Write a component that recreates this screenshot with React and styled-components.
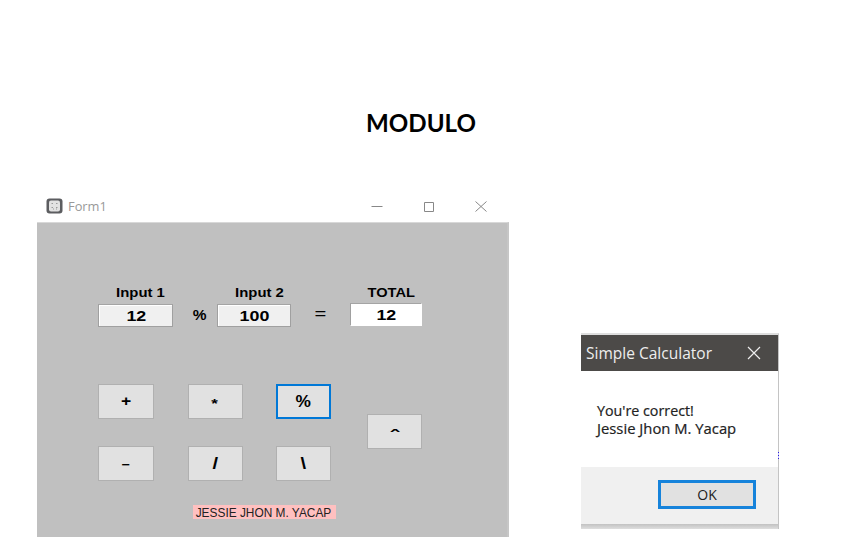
import React from 'react';
import styled, { createGlobalStyle } from 'styled-components';

const GlobalStyle = createGlobalStyle`
  * { box-sizing: border-box; }
  body { margin: 0; background: #fff; overflow: hidden; }
`;

const Page = styled.main`
  width: 844px;
  height: 543px;
  padding-top: 104px;
  background: #fff;
  color: #000;
  font-family: 'Liberation Sans', sans-serif;
`;

const Heading = styled.h1`
  margin: 0 0 50px;
  height: 36px;
  padding-right: 2px;
  text-align: center;
  font: 700 25px/36px Lato, sans-serif;
`;

const Desktop = styled.div`
  display: flex;
  align-items: flex-start;
  padding-left: 37px;
  gap: 72px;
`;

const Text = styled.span`
  display: inline-block;
  white-space: pre;
  transform: translate(${(p) => p.$dx || 0}px, ${(p) => p.$dy || 0}px) scaleX(${(p) => p.$stretch || 1});
  transform-origin: ${(p) => p.$origin || 'center'};
`;

const Window = styled.section`
  width: 472px;
  height: 347px;
`;

const TitleBar = styled.header`
  display: flex;
  align-items: center;
  height: 32px;
  padding: 0 22.5px 0 9px;
`;

const WindowTitle = styled.div`
  flex: 1;
  padding-left: 5px;
  color: #999;
  font: 12px/16px 'Open Sans', sans-serif;
`;

const Controls = styled.div`
  display: flex;
  gap: 40px;
`;

const Form = styled.div`
  height: 315px;
  padding: 64px 0 0 61px;
  background: #c0c0c0;
  border-top: 1px solid #d8d8d8;
  border-right: 2px solid #c6c6c6;
`;

const Inputs = styled.div`
  display: grid;
  grid-template-columns: 75px 44px 74px 59px 72px;
  height: 41px;
`;

const Field = styled.div`
  display: flex;
  flex-direction: column;
  align-items: center;
`;

const Label = styled.div`
  height: ${(p) => p.$height || 17}px;
  font: 700 12.5px/13px 'Liberation Sans', sans-serif;
`;

const ValueBox = styled.div`
  display: flex;
  align-items: center;
  justify-content: center;
  width: 100%;
  height: 23px;
  background: ${(p) => (p.$result ? '#fff' : '#f0f0f0')};
  border: 1px solid ${(p) => (p.$result ? '#fff' : '#a0a0a0')};
  border-top-color: #a4a4a4;
  border-left-color: #a0a0a0;
  box-shadow: inset 1px 1px 0 #fff;
  font: 700 15px/20px 'Liberation Sans', sans-serif;
`;

const Operator = styled.div`
  display: flex;
  justify-content: center;
  padding-top: 18px;
  font: ${(p) => (p.$light ? 400 : 700)} 15px/20px 'Liberation Sans', sans-serif;
`;

const Pad = styled.div`
  display: flex;
  gap: 36px;
  margin-top: 56px;
`;

const Keys = styled.div`
  display: grid;
  grid-template-columns: 56px 55px 55px;
  grid-template-rows: 35px 35px;
  justify-content: space-between;
  row-gap: 27px;
  width: 233px;
`;

const Key = styled.button`
  display: flex;
  align-items: center;
  justify-content: center;
  width: 100%;
  height: 35px;
  padding: 0;
  color: #000;
  background: #e1e1e1;
  border: ${(p) => (p.$active ? '2px solid #0078d7' : '1px solid #b0b0b0')};
  font: 700 ${(p) => p.$size || 15}px/20px 'Liberation Sans', sans-serif;
`;

const PowerKey = styled.div`
  width: 55px;
  padding-top: 30px;
`;

const NameTag = styled.div`
  display: flex;
  justify-content: center;
  width: 143px;
  height: 14px;
  margin: 24px 0 0 95px;
  background: #ffc0c0;
  color: #222;
  font: 12px/14px 'Liberation Sans', sans-serif;
`;

const Dialog = styled.section`
  width: 198px;
  height: 196px;
  margin-top: 143px;
  border-top: 2px solid #dedede;
  border-right: 1px solid #c4c4c4;
`;

const DialogBar = styled.header`
  display: flex;
  align-items: center;
  justify-content: space-between;
  height: 36px;
  padding: 0 17px 0 5px;
  background: #4c4a48;
  color: #eee;
  font: 16px/22px 'Open Sans', sans-serif;
`;

const Message = styled.div`
  height: 96px;
  padding: 31px 0 0 16px;
  color: #222;
  font: 14px/18px 'Open Sans', sans-serif;
  -webkit-text-stroke: 0.2px #222;
`;

const MessageLine = styled.div`
  height: 18px;
`;

const DialogFooter = styled.footer`
  display: flex;
  align-items: flex-start;
  justify-content: flex-end;
  height: 57px;
  padding: 13px 22px 0 0;
  background: #f0f0f0;
`;

const OkButton = styled.button`
  width: 98px;
  height: 29px;
  padding: 0;
  background: #e1e1e1;
  border: 3px solid #1683db;
  color: #222;
  font: 14px/23px 'Open Sans', sans-serif;
`;

const Shadow = styled.div`
  height: 5px;
  background: linear-gradient(#c2c2c2, #dedede);
`;

const EdgeMark = styled.i`
  position: absolute;
  left: 778px;
  top: 452px;
  width: 1px;
  height: 7px;
  background: repeating-linear-gradient(#2a20df 0 1px, #c9c5f6 1px 3px);
`;

const AppIcon = () => (
  <svg width="17" height="16" viewBox="0 0 17 16">
    <rect x="0.5" y="0.5" width="16" height="15" rx="3" fill="#5c5d60" />
    <rect x="3" y="2.5" width="11" height="11" rx="2" fill="#e2e2e2" />
    <path d="M5.5 5.5h1.5M10 5.5h1.5M5.5 9.5h1.5M10 9.5h1.5M7 11h1M10 11h1" stroke="#999" strokeWidth="1.2" />
  </svg>
);

const WindowButton = ({ d }) => (
  <svg width="12" height="12" viewBox="0 0 12 12" fill="none" stroke="#888" strokeWidth="1">
    <path d={d} />
  </svg>
);

const Entry = ({ label, value, result, labelStretch, labelShift }) => (
  <Field>
    <Label $height={result ? 16 : 17}>
      <Text $stretch={labelStretch} $dx={labelShift}>{label}</Text>
    </Label>
    <ValueBox $result={result}>
      <Text $stretch={1.19} $dx={result ? 0 : 1}>{value}</Text>
    </ValueBox>
  </Field>
);

const keys = [
  { symbol: '+', size: 14, stretch: 1.25, y: -1 },
  { symbol: '*', size: 13, stretch: 1.3, y: 2 },
  { symbol: '%', size: 16, stretch: 1.08, active: true },
  { symbol: '−', size: 13, stretch: 1.1, y: 1 },
  { symbol: '/', size: 16, stretch: 1.25 },
  { symbol: '\\', size: 16, stretch: 1.25 },
];

export default function App() {
  return (
    <Page>
      <GlobalStyle />
      <Heading><Text $stretch={0.965}>MODULO</Text></Heading>
      <Desktop>
        <Window>
          <TitleBar>
            <AppIcon />
            <WindowTitle><Text $origin="left" $stretch={1.07} $dy={1}>Form1</Text></WindowTitle>
            <Controls>
              <WindowButton d="M0.5 6.5h11" />
              <WindowButton d="M1.5 2.5h9v9h-9z" />
              <WindowButton d="M0.5 1.5l11 10M11.5 1.5l-11 10" />
            </Controls>
          </TitleBar>
          <Form>
            <Inputs>
              <Entry label="Input 1" value="12" labelStretch={1.19} labelShift={5} />
              <Operator><Text $stretch={1.03} $dx={5}>%</Text></Operator>
              <Entry label="Input 2" value="100" labelStretch={1.19} labelShift={5} />
              <Operator $light><Text $stretch={1.35} $dy={-1}>=</Text></Operator>
              <Entry result label="TOTAL" value="12" labelStretch={1.17} labelShift={5} />
            </Inputs>
            <Pad>
              <Keys>
                {keys.map((k) => (
                  <Key key={k.symbol} $active={k.active} $size={k.size}>
                    <Text $stretch={k.stretch} $dx={k.x} $dy={k.y}>{k.symbol}</Text>
                  </Key>
                ))}
              </Keys>
              <PowerKey>
                <Key $size={17}><Text $stretch={1.5} $dy={5}>ˆ</Text></Key>
              </PowerKey>
            </Pad>
            <NameTag><Text $stretch={0.99} $dx={-1} $dy={1}>JESSIE JHON M. YACAP</Text></NameTag>
          </Form>
        </Window>
        <Dialog>
          <DialogBar>
            <Text $origin="left" $stretch={0.97}>Simple Calculator</Text>
            <svg width="14" height="14" viewBox="0 0 14 14" stroke="#eee" strokeWidth="1.2">
              <path d="M1 1l12 12M13 1L1 13" />
            </svg>
          </DialogBar>
          <Message>
            <MessageLine><Text $origin="left" $stretch={1.02}>You're correct!</Text></MessageLine>
            <MessageLine><Text $origin="left" $stretch={1.058}>Jessie Jhon M. Yacap</Text></MessageLine>
          </Message>
          <DialogFooter>
            <OkButton>OK</OkButton>
          </DialogFooter>
          <Shadow />
        </Dialog>
      </Desktop>
      <EdgeMark />
    </Page>
  );
}
